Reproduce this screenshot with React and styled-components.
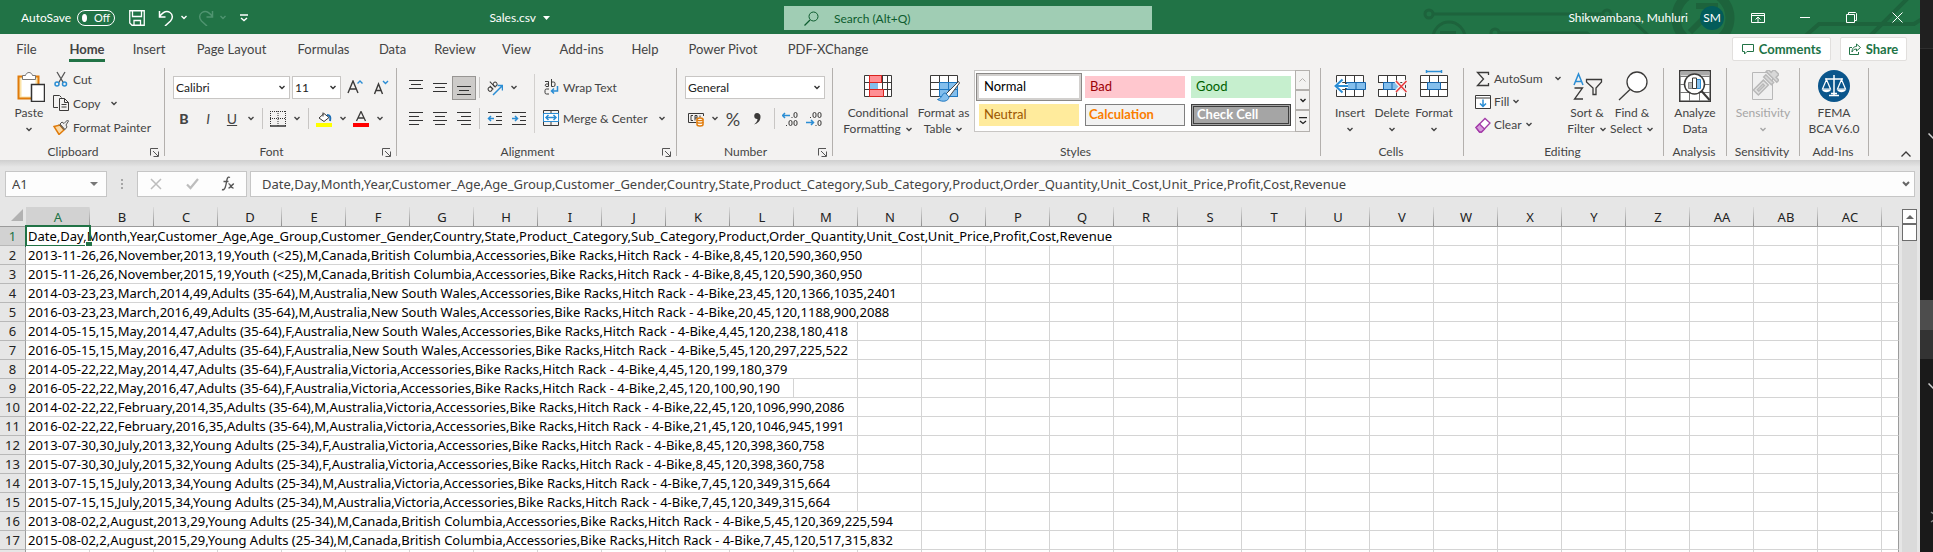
import React from "react";
import styled, { createGlobalStyle, css } from "styled-components";

const GlobalStyle = createGlobalStyle`
  * { box-sizing: border-box; }
  body { margin: 0; overflow: hidden; background: #1a1a1a; }
  body, button, input, select { font-family: Lato, "Open Sans", sans-serif; font-size: 12px; color: #444; }
  button { border: 0; padding: 0; margin: 0; background: none; }
  svg { display: block; flex: none; }
`;

const sheetFont = css`
  font-family: "Noto Sans", "Open Sans", sans-serif;
  font-size: 13px;
`;

/* ---------- shell ---------- */
const Desktop = styled.div`
  display: flex;
  height: 100vh;
`;
const ExcelWindow = styled.main`
  flex: 1;
  min-width: 0;
  display: flex;
  flex-direction: column;
  background: #e6e6e6;
`;
const BackWindow = styled.aside`
  width: 13px;
  display: flex;
  flex-direction: column;
  background: #1a1a1a;
`;
const BackBlock = styled.div`
  height: ${(p) => p.$h}px;
  background: ${(p) => p.$bg || "transparent"};
  border-bottom: ${(p) => (p.$line ? "1px solid #2e2e2e" : "0")};
  padding: ${(p) => p.$pad || 0}px 0 0 8px;
  overflow: hidden;
`;

/* ---------- title bar ---------- */
const TitleBar = styled.header`
  position: relative;
  display: grid;
  grid-template-columns: 1fr 368px 1fr;
  align-items: center;
  height: 34px;
  padding: 0 0 6px 16px;
  background: #217346;
  color: #fff;
`;
const TitleArt = styled.svg`
  position: absolute;
  right: 0;
  top: 0;
`;
const TitleSide = styled.div`
  position: relative;
  display: flex;
  align-items: center;
  height: 28px;
  padding: 5px 0 0 5px;
`;
const AutoSave = styled.label`
  display: flex;
  align-items: center;
  gap: 6px;
`;
const ToggleTrack = styled.span`
  display: flex;
  align-items: center;
  gap: 7px;
  width: 38px;
  height: 16px;
  padding: 0 4px 0 0;
  border: 1px solid #fff;
  border-radius: 8px;
  font-size: 11px;
  input {
    appearance: none;
    width: 8px;
    height: 8px;
    margin: 0 0 0 4px;
    border-radius: 50%;
    background: #fff;
  }
`;
const TitleButton = styled.button`
  display: flex;
  align-items: center;
  justify-content: center;
  width: ${(p) => p.$w}px;
  height: 24px;
  color: ${(p) => (p.$dim ? "#4f9470" : "#fff")};
`;
const FileName = styled.button`
  display: flex;
  align-items: center;
  gap: 7px;
  margin: 0 234px 0 auto;
  color: #fff;
`;
const SearchBox = styled.label`
  display: flex;
  align-items: center;
  gap: 15px;
  height: 24px;
  margin-top: 6px;
  padding-left: 20px;
  background: #a0cdb4;
  color: #0e5c2f;
  input {
    flex: 1;
    min-width: 0;
    border: 0;
    padding: 0;
    outline: 0;
    background: transparent;
  }
  input::placeholder { color: #0e5c2f; opacity: 1; }
`;
const Account = styled.button`
  display: flex;
  align-items: center;
  gap: 12px;
  margin-left: auto;
  margin-right: 11px;
  color: #fff;
`;
const Avatar = styled.span`
  display: grid;
  place-items: center;
  width: 24px;
  height: 24px;
  border-radius: 50%;
  background: #035c5a;
`;

/* ---------- tabs ---------- */
const TabBar = styled.nav`
  display: flex;
  align-items: flex-start;
  height: 34px;
  padding: 3px 13px 0 2px;
  background: #f3f2f1;
`;
const Tab = styled.button`
  display: flex;
  justify-content: center;
  width: ${(p) => p.$w}px;
  height: 26px;
  font-size: 13px;
  font-weight: ${(p) => (p.$active ? 700 : 400)};
  span {
    height: 25px;
    line-height: 25px;
    border-bottom: 3px solid ${(p) => (p.$active ? "#217346" : "transparent")};
  }
`;
const TabActions = styled.div`
  display: flex;
  gap: 9px;
  margin-left: auto;
`;
const ActionButton = styled.button`
  display: flex;
  align-items: center;
  justify-content: center;
  gap: 5px;
  width: ${(p) => p.$w}px;
  height: 24px;
  border: 1px solid #e1dfdd;
  border-radius: 2px;
  background: #fff;
  color: #217346;
  font-size: 13px;
  font-weight: 700;
`;

/* ---------- ribbon ---------- */
const Ribbon = styled.section`
  display: flex;
  height: 92px;
  padding-bottom: 4px;
  background: #f3f2f1;
`;
const GroupBox = styled.section`
  display: flex;
  flex-direction: column;
  flex: none;
  width: ${(p) => p.$w}px;
  border-right: 1px solid #b3b0ad;
`;
const GroupBody = styled.div`
  flex: 1;
  display: flex;
  justify-content: ${(p) => (p.$center ? "center" : "flex-start")};
  padding-left: ${(p) => p.$pad || 0}px;
`;
const GroupFooter = styled.footer`
  display: flex;
  height: 12px;
  line-height: 15px;
  padding-right: 2px;
  h2 {
    flex: 1;
    margin: 0;
    font-size: 12px;
    font-weight: 400;
    text-align: center;
  }
  button { width: 16px; padding: 4px 0 0 4px; }
`;
const LargeButton = styled.button`
  display: flex;
  flex-direction: column;
  align-items: center;
  width: ${(p) => p.$w}px;
  height: 72px;
  padding-top: 2px;
  line-height: 16px;
  white-space: nowrap;
  color: ${(p) => (p.disabled ? "#a6a6a6" : "#444")};
  > svg { margin-bottom: 3px; }
`;
const ButtonLine = styled.span`
  display: flex;
  align-items: center;
  justify-content: center;
  gap: 4px;
  height: 16px;
`;
const CommandList = styled.div`
  display: flex;
  flex-direction: column;
  padding-left: ${(p) => p.$pad || 0}px;
  width: ${(p) => (p.$w ? p.$w + "px" : "auto")};
`;
const Command = styled.button`
  display: flex;
  align-items: center;
  gap: ${(p) => p.$gap || 4}px;
  height: ${(p) => p.$h || 24}px;
  padding-bottom: 2px;
  white-space: nowrap;
`;
const ArrowSlot = styled.span`
  margin-left: ${(p) => p.$l || 0}px;
`;
const ToolRows = styled.div`
  display: flex;
  flex-direction: column;
  gap: 7px;
  padding: 8px 0 0 ${(p) => p.$pad || 0}px;
`;
const ToolRow = styled.div`
  display: flex;
  align-items: center;
  height: 24px;
  gap: ${(p) => p.$gap || 0}px;
  padding-left: ${(p) => p.$pad || 0}px;
  padding-bottom: 1px;
`;
const IconButton = styled.button`
  display: flex;
  align-items: center;
  justify-content: center;
  width: ${(p) => (p.$arrow ? 13 : 24)}px;
  height: 24px;
  font-size: ${(p) => p.$size || 14}px;
  font-weight: ${(p) => (p.$bold ? 900 : 400)};
  font-style: ${(p) => (p.$italic ? "italic" : "normal")};
  text-decoration: ${(p) => (p.$underline ? "underline" : "none")};
  ${(p) =>
    p.$pressed &&
    css`
      border: 1px solid #979593;
      background: #cdcbc9;
    `}
`;
const Divider = styled.span`
  width: 1px;
  height: 21px;
  margin: 0 3px 0 ${(p) => (p.$wide ? 5 : 3)}px;
  background: #c8c6c4;
`;
const TallDivider = styled.span`
  width: 1px;
  height: 59px;
  margin: 6px 8px 0 3px;
  background: #d2d0ce;
`;
const SelectBox = styled.label`
  display: flex;
  align-items: center;
  width: ${(p) => p.$w}px;
  height: 23px;
  padding-right: 3px;
  border: 1px solid #c8c6c4;
  background: #fff;
  color: #333;
  select {
    flex: 1;
    min-width: 0;
    height: 21px;
    padding: 0 2px;
    border: 0;
    outline: 0;
    appearance: none;
    background: transparent;
    color: #222;
  }
`;
const Gallery = styled.div`
  display: flex;
  height: 62px;
  margin-top: 2px;
  border: 1px solid #c8c6c4;
  border-right: 0;
  background: #fff;
`;
const StyleGrid = styled.div`
  display: grid;
  grid-template-columns: repeat(3, 100px);
  grid-auto-rows: 22px;
  gap: 6px;
  padding: 5px 4px;
`;
const StyleSwatch = styled.button`
  padding: 0 0 1px ${(p) => (p.$border ? 3 : 5)}px;
  text-align: left;
  font-size: 13px;
  line-height: 15px;
  font-weight: ${(p) => (p.$bold ? 700 : 400)};
  color: ${(p) => p.$fg};
  background: ${(p) => p.$bg};
  border: ${(p) => p.$border || "0"};
  box-shadow: ${(p) => (p.$selected ? "0 0 0 2px #d2d0ce, 0 0 0 3px #8a8886" : "none")};
`;
const GalleryScroll = styled.div`
  display: grid;
  grid-template-rows: 20px 20px 1fr;
  width: 15px;
  margin: -1px 0;
  button {
    display: grid;
    place-items: center;
    border: 1px solid #b3b0ad;
    background: #f3f2f1;
  }
`;
const CollapseButton = styled.button`
  align-self: flex-end;
  margin: 0 8px -2px auto;
`;

/* ---------- formula bar ---------- */
const FormulaBar = styled.section`
  display: flex;
  height: 47px;
  padding: 11px 5px 10px 5px;
  background: linear-gradient(#cfcfcf, #e6e6e6 7px);
`;
const WhiteBox = styled.div`
  display: flex;
  align-items: center;
  flex: ${(p) => (p.$w ? "none" : "1")};
  width: ${(p) => (p.$w ? p.$w + "px" : "auto")};
  height: 26px;
  margin-left: ${(p) => p.$gap || 0}px;
  padding: 0 ${(p) => p.$end || 0}px 0 ${(p) => p.$start || 0}px;
  border: 1px solid #c6c6c6;
  background: #fdfdfd;
  input {
    flex: 1;
    min-width: 0;
    border: 0;
    padding: 0;
    outline: 0;
    background: transparent;
    ${sheetFont}
  }
`;
const FormulaTool = styled.button`
  display: grid;
  place-items: center;
  width: 36px;
  height: 24px;
`;
const Grip = styled.span`
  width: 30px;
  display: grid;
  place-items: center;
`;

/* ---------- sheet ---------- */
const SheetArea = styled.section`
  flex: 1;
  min-height: 0;
  display: flex;
  overflow: hidden;
`;
const SheetClip = styled.div`
  flex: 1;
  min-width: 0;
  overflow: hidden;
`;
const Sheet = styled.table`
  width: 100%;
  table-layout: fixed;
  border-collapse: separate;
  border-spacing: 0;
  ${sheetFont}
  color: #000;
  col { width: 64px; }
  col:first-child { width: 26px; }
  col:last-child { width: auto; }
`;
const Corner = styled.td`
  height: 20px;
  padding: 0 3px 3px 0;
  border-bottom: 1px solid #9b9b9b;
  svg { margin-left: auto; }
`;
const ColumnHead = styled.th`
  height: 20px;
  padding: 0;
  line-height: 18px;
  font-weight: 400;
  color: ${(p) => (p.$active ? "#217346" : "#222")};
  border-bottom: 1px solid #9b9b9b;
  background: linear-gradient(#dcdcdc, #8f8f8f) right / ${(p) => (p.$last ? 0 : 1)}px 100% no-repeat
    ${(p) => (p.$active ? "#d2d2d2" : "#e6e6e6")};
`;
const RowHead = styled.th`
  height: 19px;
  padding: 0;
  line-height: 18px;
  font-weight: 400;
  color: ${(p) => (p.$active ? "#217346" : "#222")};
  border-right: 1px solid #9b9b9b;
  border-bottom: 1px solid #b8b8b8;
  background: ${(p) => (p.$active ? "#d2d2d2" : "#e6e6e6")};
`;
const Cell = styled.td`
  position: relative;
  height: 19px;
  padding: 0 0 0 2px;
  line-height: 18px;
  white-space: nowrap;
  background: #fff;
  border-right: 1px solid #d4d4d4;
  border-bottom: 1px solid #d4d4d4;
  &:last-child { border-right-color: #9b9b9b; }
`;
const Selection = styled.span`
  position: absolute;
  left: -1px;
  top: -2px;
  width: 66px;
  height: 22px;
  border: 2px solid #217346;
  &::after {
    content: "";
    position: absolute;
    right: -3px;
    bottom: -3px;
    width: 6px;
    height: 6px;
    background: #217346;
    border: solid #fff;
    border-width: 1px 0 0 1px;
  }
`;
const ScrollBar = styled.div`
  display: flex;
  flex-direction: column;
  width: 15px;
  margin: 2px 3px 0 3px;
  background: #dadada;
`;
const ScrollPart = styled.button`
  display: grid;
  place-items: center;
  height: ${(p) => p.$h}px;
  border: 1px solid #6d6d6d;
  background: #fff;
`;

/* ---------- drawings ---------- */
const Icon = ({ w = 16, h = w, children, stroke = "#3b3a39", ...rest }) => (
  <svg width={w} height={h} viewBox={`0 0 ${w} ${h}`} fill="none" stroke={stroke} aria-hidden="true" {...rest}>
    {children}
  </svg>
);
const Arrow = ({ color = "#444" }) => (
  <Icon w={8} h={5} stroke={color} strokeWidth="1.4"><path d="M1.500 1 4 3.500 6.500 1" /></Icon>
);
const Lines = ({ y, x = [1, 1, 1, 1], e = [15, 15, 15, 15] }) => (
  <Icon stroke="#333"><path d={y.map((v, i) => `M${x[i]} ${v}.5H${e[i]}`).join("")} /></Icon>
);
const Launcher = () => (
  <Icon w={9} h={9} stroke="#555"><path d="M.5 7.500V.5H8M3 3l5 5M8.500 3.500v5h-5" /></Icon>
);
const PasteIcon = () => (
  <Icon w={32}>
    <path d="M6 6.500H25.500V28.500H5.500V6.500Z" fill="#fbe3a8" stroke="#e07b0a" strokeWidth="2" />
    <path d="M8.500 8.500h14v18h-14z" fill="#fff" stroke="none" />
    <path d="M9.500 9.500v-4h3c1-4 6-4 7 0h3v4z" fill="#fff" stroke="#777" />
    <path d="M18.500 14.500h13v17h-13z" fill="#fff" stroke="#333" strokeWidth="1.500" />
  </Icon>
);
const CutIcon = () => (
  <Icon><path d="M4 1l6.500 11M12 1 5.500 12" strokeWidth="1.300" stroke="#555" /><circle cx="4" cy="13" r="2" stroke="#2a8dd4" strokeWidth="1.500" /><circle cx="11.500" cy="13" r="2" stroke="#2a8dd4" strokeWidth="1.500" /></Icon>
);
const CopyIcon = () => (
  <Icon><path d="M5 12.500H.5V.5h6l2 2M6.500 3.500h5l4 4v8h-9zM11.500 3.500v4h4M8.500 9.500h5M8.500 12h5" /></Icon>
);
const PainterIcon = () => (
  <Icon>
    <path d="M1 7.500 7 6l4 5-5 4.500z" fill="#fbd9a5" stroke="#e07b0a" strokeWidth="1.500" />
    <path d="M6 5.500 11.500 11M7 5l2-2 2 1.500L14.500 1l1 1L13 6l1 2-2 2.500z" stroke="#555" fill="#eee" />
  </Icon>
);
const BordersIcon = () => (
  <Icon stroke="#333"><path d="M.5 0v15M8 0v15M15.500 0v15M0 .5h16M0 7.500h16" strokeDasharray="1 1" /><path d="M0 15h16" strokeWidth="1.500" /></Icon>
);
const FillColorIcon = () => (
  <Icon><path d="M7 1.500v4M3 7l5-4.500 5 4L8 10.500z" fill="#fff" /><path d="M11 4c3 0 4 2 3 6" stroke="#1f6fb5" strokeWidth="2" /><path d="M0 12h16v4H0z" fill="#ff0" stroke="none" /></Icon>
);
const FontColorIcon = () => (
  <Icon><path d="M3.500 10 8 .5 12.500 10M5 7h6" strokeWidth="1.300" /><path d="M0 12h16v4H0z" fill="#f00" stroke="none" /></Icon>
);
const GrowIcon = ({ down }) => (
  <Icon w={16} h={16}>
    <path d={down ? "M1.500 14 5.500 4l4 10M3 10.500h5" : "M1 13 6 1l5 12M3 9h6"} strokeWidth="1.400" />
    <path d={down ? "M10 1l2.500 2.500L15 1" : "M10.500 3.500 13 1l2.500 2.500"} stroke="#2a8dd4" strokeWidth="1.400" />
  </Icon>
);
const OrientIcon = () => (
  <Icon><g transform="rotate(-45 6 7)"><circle cx="2.500" cy="6.500" r="2" /><path d="M4.500 4v5M7.500 1v8" /><circle cx="9.500" cy="6.500" r="2" /></g><path d="M6 15 15 6M10.500 5.500H15.500V10.500" stroke="#2a8dd4" strokeWidth="1.500" /></Icon>
);
const WrapIcon = () => (
  <Icon>
    <path d="M2 2.500h3.500v5H3a1.500 1.500 0 0 1 0-2.500h2.500M8.500 0v7.500h2a1.500 1.500 0 0 0 1.500-1.500V4.500A1.500 1.500 0 0 0 10.500 3h-2M6 10H3.500A1.500 1.500 0 0 0 2 11.500v2A1.500 1.500 0 0 0 3.500 15H6" />
    <path d="M14.500 7v5H8.500M11 9.500 8.500 12l2.500 2.500" stroke="#2a8dd4" strokeWidth="1.500" />
  </Icon>
);
const MergeIcon = () => (
  <Icon><path d="M.5.5h15v15H.5zM8 .5v3M8 12v3.500" /><path d="M.5 3.500h15v8H.5z" fill="#fff" stroke="#2a8dd4" /><path d="M3 7.500h10M5.500 5 3 7.500 5.500 10M10.500 5 13 7.500 10.500 10" stroke="#2a8dd4" strokeWidth="1.500" /></Icon>
);
const IndentIcon = ({ out }) => (
  <Icon><path d="M1 1.500h14M9 5.500h6M9 9.500h6M1 13.500h14" stroke="#333" /><path d={out ? "M7 7.500H1.500M4 5 1.500 7.500 4 10" : "M1 7.500h5.500M4 5l2.500 2.500L4 10"} stroke="#2a8dd4" strokeWidth="1.500" /></Icon>
);
const MoneyIcon = () => (
  <Icon><path d="M15.500 5V2.500H.5v9H8M5 4.500H3v5h2M7 9.500v-5h2V7H7M12 4.500v2" /><path d="M9 8.500c0-2 6-2 6 0v5c0 2-6 2-6 0z" fill="#fff" stroke="#e07b0a" strokeWidth="1.500" /><path d="M9 8.500c0 1.500 6 1.500 6 0M9 11c0 1.500 6 1.500 6 0" stroke="#e07b0a" strokeWidth="1.300" /></Icon>
);
const CommaIcon = () => (
  <Icon w={10} h={14}><path d="M5 1a3 3 0 1 0 .5 6C5.500 9 4 11 2 12.500 6 11.500 8.500 8.500 8.500 5A3.500 3.500 0 0 0 5 1z" fill="#3b3a39" stroke="none" /></Icon>
);
const DecimalIcon = ({ less }) => (
  <Icon w={16}>
    {less ? (
      <><rect x="7" y="1.500" width="3" height="5" rx="1.500" /><rect x="12" y="1.500" width="3" height="5" rx="1.500" /><rect x="12" y="9.500" width="3" height="5" rx="1.500" /><path d="M4 6.500h1M9.500 14.500h1" /><path d="M0 11.500h7.500M5 9l2.500 2.500L5 14" stroke="#2a8dd4" strokeWidth="1.500" /></>
    ) : (
      <><rect x="12" y="1.500" width="3" height="5" rx="1.500" /><rect x="7" y="9.500" width="3" height="5" rx="1.500" /><rect x="12" y="9.500" width="3" height="5" rx="1.500" /><path d="M9.500 6.500h1M4 14.500h1" /><path d="M8 4.500H.5M3 2 .5 4.500 3 7" stroke="#2a8dd4" strokeWidth="1.500" /></>
    )}
  </Icon>
);
const GridFrame = ({ y = 5 }) => (
  <path d={`M2.500 ${y}.5h27v21h-27zM2.500 ${y + 7}.5h27M2.500 ${y + 14}.5h27M11.500 ${y}.5v21M20.500 ${y}.5v21`} fill="#fff" />
);
const ConditionalIcon = () => (
  <Icon w={32}><GridFrame /><path d="M25.500 5.500v21" /><path d="M7.500 5.500h12v7h-12zM7.500 19.500h14v7h-14z" fill="#ff8f94" stroke="#d8231f" /><path d="M8 13h8v6H8z" fill="#83beec" stroke="none" /><path d="M7.500 5.500v21" stroke="#d8231f" /></Icon>
);
const FormatTableIcon = () => (
  <Icon w={32}><GridFrame /><path d="M11.500 12.500h18v14h-18z" fill="#83beec" stroke="#1f78c1" /><path d="M20.500 12.500v14M11.500 19.500h18" stroke="#1f78c1" /><path d="M30.500 11.500 18 24l3 3 10.500-14z" fill="#fff" stroke="#444" /><path d="M17.500 23c-4 0-2.500 5-8 6.500 5 3 11 2 11.500-2.500z" fill="#83beec" stroke="#1f78c1" /></Icon>
);
const CellInsertIcon = () => (
  <Icon w={32}><GridFrame /><path d="M12.500 12.500h19v7h-19zM22 12.500v7" fill="#83beec" stroke="#1565ad" /><path d="M14 16H2M9 9l-7.500 7L9 23" stroke="#fff" strokeWidth="4" /><path d="M14 16H2M8.500 9.500 1.500 16l7 6.500" stroke="#2a8dd4" strokeWidth="2" /></Icon>
);
const CellDeleteIcon = () => (
  <Icon w={32}><GridFrame /><path d="M0 13h8v6H0z" fill="#f3f2f1" stroke="none" /><path d="M7.500 12.500h13l3.500 3.500-3.500 3.500h-13zM16 12.500v7" fill="#83beec" stroke="#1565ad" /><path d="M20 11l10.500 11M30.500 11 20 22" stroke="#f3f2f1" strokeWidth="4" /><path d="M20 11l10.500 11M30.500 11 20 22" stroke="#e8393c" strokeWidth="1.500" /></Icon>
);
const CellFormatIcon = () => (
  <Icon w={32}><GridFrame /><path d="M9.500 12.500h13v7h-13z" fill="#83beec" stroke="#1565ad" /><path d="M8.500 0v3M23.500 0v3M8.500 1.500h15" stroke="#2a8dd4" strokeWidth="1.500" /></Icon>
);
const SigmaIcon = () => <Icon><path d="M13.500 4V1.500h-11L8.500 8l-6 6.500h11V12" strokeWidth="1.300" /></Icon>;
const FillDownIcon = () => (
  <Icon><path d="M.5 1.500h15v13H.5zM.5 4h15" fill="#fff" /><path d="M8 5.500v7M5 9.500l3 3 3-3" stroke="#2a8dd4" strokeWidth="1.500" /></Icon>
);
const ClearIcon = () => (
  <Icon><path d="M1 10.500 10 1.500l5 4.500-8.500 9H4.500z" fill="#fff" stroke="#a33ba8" strokeWidth="1.300" /><path d="M1 10.500 4.500 7l5 5-3 3h-2z" fill="#d69bdb" stroke="#a33ba8" strokeWidth="1.300" /></Icon>
);
const SortIcon = () => (
  <Icon w={32}><path d="M3 15 7.500 4l4.500 11M4.500 11.500h6" stroke="#2a8dd4" strokeWidth="1.500" /><path d="M3.500 18h8l-8 11h8.500" strokeWidth="1.300" /><path d="M15.500 9.500h15v2.500l-5.500 6v6.500h-3v-6.500l-6.500-6z" strokeWidth="1.300" /></Icon>
);
const FindIcon = () => (
  <Icon w={32}><circle cx="21" cy="12" r="10" fill="#fff" strokeWidth="1.300" /><path d="M14 19.500 3 30" strokeWidth="1.300" /></Icon>
);
const AnalyzeIcon = () => (
  <Icon w={32}><path d="M.75.75h30.500v30.500H.75z" fill="#fff" strokeWidth="1.500" /><path d="M1.500 1.500h29v4h-29z" fill="#aaa" stroke="none" /><path d="M1 6.500h30M1 14.500h30M1 22.500h30M10.500 6v25M20.500 6v25" stroke="#777" /><circle cx="15.500" cy="14" r="10" fill="#fff" strokeWidth="1.500" /><path d="M22.500 21l8 9" strokeWidth="2" /><path d="M9.500 12.500h4v6h-4z" fill="#b9b9b9" stroke="#888" /><path d="M17.500 9.500h4v9h-4z" fill="#83beec" stroke="#2a8dd4" /><path d="M13.500 8h4v10.500h-4z" fill="#fff" /></Icon>
);
const SensitivityIcon = () => (
  <Icon w={32} stroke="#b8b8b8">
    <path d="M5.500 2.500h20v27h-20z" fill="#f0f0f0" />
    <g transform="rotate(-45 16 14)">
      <path d="M5 11.500h14v7H5zM8 14h8v2H8z" fill="#e4e4e4" strokeWidth="1.500" />
      <path d="M21.500 9.500h3v11h-3zM27 7.500h3v4h4v7h-4v4h-3z" fill="#d8d8d8" strokeWidth="1.500" />
    </g>
  </Icon>
);
const FemaIcon = () => (
  <Icon w={32} stroke="#fff"><circle cx="16" cy="16" r="16" fill="#0b568c" stroke="none" /><path d="M16 5v20M7 9h18M11 25.500h10M13 23.500h6" strokeWidth="1.500" /><path d="M8.500 9.500 4.500 19h8zM23.500 9.500l-4 9.500h8z" strokeWidth="1.200" /><path d="M4 19.500h9c-1 3.500-8 3.500-9 0zM19 19.500h9c-1 3.500-8 3.500-9 0z" fill="#fff" stroke="none" /></Icon>
);

/* ---------- data ---------- */
const TABS = [
  ["File", 49], ["Home", 72], ["Insert", 52], ["Page Layout", 113], ["Formulas", 71], ["Data", 67],
  ["Review", 58], ["View", 65], ["Add-ins", 65], ["Help", 62], ["Power Pivot", 94], ["PDF-XChange", 116],
];
const HEADER =
  "Date,Day,Month,Year,Customer_Age,Age_Group,Customer_Gender,Country,State,Product_Category,Sub_Category,Product,Order_Quantity,Unit_Cost,Unit_Price,Profit,Cost,Revenue";
const RACK = "Accessories,Bike Racks,Hitch Rack - 4-Bike";
/* each record: text of the line, and how many columns it runs over */
const ROWS = [
  [HEADER, 18],
  [`2013-11-26,26,November,2013,19,Youth (<25),M,Canada,British Columbia,${RACK},8,45,120,590,360,950`, 14],
  [`2015-11-26,26,November,2015,19,Youth (<25),M,Canada,British Columbia,${RACK},8,45,120,590,360,950`, 14],
  [`2014-03-23,23,March,2014,49,Adults (35-64),M,Australia,New South Wales,${RACK},23,45,120,1366,1035,2401`, 14],
  [`2016-03-23,23,March,2016,49,Adults (35-64),M,Australia,New South Wales,${RACK},20,45,120,1188,900,2088`, 14],
  [`2014-05-15,15,May,2014,47,Adults (35-64),F,Australia,New South Wales,${RACK},4,45,120,238,180,418`, 13],
  [`2016-05-15,15,May,2016,47,Adults (35-64),F,Australia,New South Wales,${RACK},5,45,120,297,225,522`, 13],
  [`2014-05-22,22,May,2014,47,Adults (35-64),F,Australia,Victoria,${RACK},4,45,120,199,180,379`, 13],
  [`2016-05-22,22,May,2016,47,Adults (35-64),F,Australia,Victoria,${RACK},2,45,120,100,90,190`, 12],
  [`2014-02-22,22,February,2014,35,Adults (35-64),M,Australia,Victoria,${RACK},22,45,120,1096,990,2086`, 13],
  [`2016-02-22,22,February,2016,35,Adults (35-64),M,Australia,Victoria,${RACK},21,45,120,1046,945,1991`, 13],
  [`2013-07-30,30,July,2013,32,Young Adults (25-34),F,Australia,Victoria,${RACK},8,45,120,398,360,758`, 13],
  [`2015-07-30,30,July,2015,32,Young Adults (25-34),F,Australia,Victoria,${RACK},8,45,120,398,360,758`, 13],
  [`2013-07-15,15,July,2013,34,Young Adults (25-34),M,Australia,Victoria,${RACK},7,45,120,349,315,664`, 13],
  [`2015-07-15,15,July,2015,34,Young Adults (25-34),M,Australia,Victoria,${RACK},7,45,120,349,315,664`, 13],
  [`2013-08-02,2,August,2013,29,Young Adults (25-34),M,Canada,British Columbia,${RACK},5,45,120,369,225,594`, 14],
  [`2015-08-02,2,August,2015,29,Young Adults (25-34),M,Canada,British Columbia,${RACK},7,45,120,517,315,832`, 14],
];
const COLUMNS = Array.from({ length: 29 }, (_, i) =>
  i < 26 ? String.fromCharCode(65 + i) : "A" + String.fromCharCode(39 + i)
);

/* ---------- parts ---------- */
const Group = ({ title, w, pad, center, launcher, children }) => (
  <GroupBox $w={w}>
    <GroupBody $pad={pad} $center={center}>{children}</GroupBody>
    <GroupFooter>
      <h2>{title}</h2>
      {launcher && <button aria-label={`${title} settings`}><Launcher /></button>}
    </GroupFooter>
  </GroupBox>
);
const Large = ({ icon, lines, arrow, w, disabled }) => (
  <LargeButton $w={w} disabled={disabled}>
    {icon}
    <ButtonLine>{lines[0]}</ButtonLine>
    <ButtonLine>
      {lines[1]}
      {arrow && <Arrow color={disabled ? "#a6a6a6" : "#444"} />}
    </ButtonLine>
  </LargeButton>
);
const Pick = ({ w, label, value }) => (
  <SelectBox $w={w}>
    <select aria-label={label} defaultValue={value}><option>{value}</option></select>
    <Arrow color="#333" />
  </SelectBox>
);
const More = ({ label }) => <IconButton $arrow aria-label={label}><Arrow /></IconButton>;

function TopBar() {
  return (
    <TitleBar>
      <TitleArt width="500" height="34" viewBox="0 0 500 34" fill="none" stroke="#1d633c" strokeWidth="3" aria-hidden="true">
        <circle cx="9" cy="14" r="4" /><path d="M13 14h170" /><circle cx="187" cy="14" r="4" />
        <circle cx="29" cy="38" r="16" /><path d="M20 33h16" strokeWidth="4" />
        <circle cx="75" cy="33" r="4" /><path d="M79 33h88l8 6M191 17l18 0 22 21" />
        <circle cx="283" cy="18" r="27" strokeWidth="9" /><path d="M270 32l24-24M276 6h19v19" strokeWidth="6" />
        <path d="M383 38l16-14H494l8-5M448 38 490-4" strokeWidth="4" />
      </TitleArt>
      <TitleSide>
        <AutoSave>
          AutoSave
          <ToggleTrack><input type="checkbox" role="switch" aria-label="AutoSave" />Off</ToggleTrack>
        </AutoSave>
        <TitleButton $w={44} aria-label="Save">
          <Icon stroke="#fff"><path d="M.75.75h14.500v14.500H3L.75 13zM3.500 1v5.500h9V1M5 15v-4.500h6.500V15" strokeWidth="1.300" /></Icon>
        </TitleButton>
        <TitleButton $w={14} aria-label="Undo">
          <Icon stroke="#fff"><path d="M1.500 1v6h6M1.500 6.500C5 2 9 .5 12 2.500c3 2 3 6 .5 8.500L7 16" strokeWidth="1.500" /></Icon>
        </TitleButton>
        <TitleButton $w={22} aria-label="Undo history"><Arrow color="#fff" /></TitleButton>
        <TitleButton $w={22} $dim aria-label="Redo">
          <Icon stroke="#4f9470"><path d="M14.500 1v6h-6M14.500 6.500C11 2 7 .5 4 2.500 1 4.500 1 8.500 3.500 11L9 16" strokeWidth="1.500" /></Icon>
        </TitleButton>
        <TitleButton $w={11} $dim aria-label="Redo history"><Arrow color="#4f9470" /></TitleButton>
        <TitleButton $w={32} aria-label="Customize quick access">
          <Icon w={8} h={8} stroke="#fff"><path d="M0 1h8M1 4l3 2.500L7 4" strokeWidth="1.400" /></Icon>
        </TitleButton>
        <FileName>
          Sales.csv
          <Icon w={7} h={4} stroke="none"><path d="M0 0h7L3.500 4z" fill="#fff" /></Icon>
        </FileName>
      </TitleSide>
      <SearchBox>
        <Icon w={15} stroke="#0e5c2f"><circle cx="9.500" cy="5.500" r="4.500" /><path d="M6 9 .5 14.500" strokeWidth="1.300" /></Icon>
        <input type="search" aria-label="Search" placeholder="Search (Alt+Q)" />
      </SearchBox>
      <TitleSide>
        <Account>Shikwambana, Muhluri<Avatar>SM</Avatar></Account>
        <TitleButton $w={46} aria-label="Ribbon display options">
          <Icon w={14} h={12} stroke="#fff"><path d="M.5 1.500h13v9H.5zM.5 3.500h13M7 10V5M4.500 7.500 7 5l2.500 2.500" /></Icon>
        </TitleButton>
        <TitleButton $w={47} aria-label="Minimize"><Icon w={10} h={2} stroke="#fff"><path d="M0 .5h10" /></Icon></TitleButton>
        <TitleButton $w={46} aria-label="Restore">
          <Icon w={11} stroke="#fff"><path d="M.5 2.500h8v8h-8zM2.500 2V.5h7l1 1V8.500H9" /></Icon>
        </TitleButton>
        <TitleButton $w={46} aria-label="Close"><Icon w={11} stroke="#fff"><path d="M.5.5l10 10M10.500.5l-10 10" /></Icon></TitleButton>
      </TitleSide>
    </TitleBar>
  );
}

function Tabs() {
  return (
    <TabBar>
      {TABS.map(([name, w]) => (
        <Tab key={name} $w={w} $active={name === "Home"}><span>{name}</span></Tab>
      ))}
      <TabActions>
        <ActionButton $w={99}>
          <Icon w={12} h={11} stroke="#217346"><path d="M.5.5h11v7H5l-2.500 2.500V7.500h-2z" /></Icon>Comments
        </ActionButton>
        <ActionButton $w={67}>
          <Icon w={12} h={12} stroke="#217346"><path d="M3 4.500H.5v7h9V9M7.500 1l4 3.500-4 3.500V6C5 6 4 7 3 9c0-4 2-5.500 4.500-5.500z" /></Icon>Share
        </ActionButton>
      </TabActions>
    </TabBar>
  );
}

function HomeRibbon() {
  return (
    <Ribbon>
      <Group title="Clipboard" w={165} pad={8} launcher>
        <Large icon={<PasteIcon />} lines={["Paste"]} arrow w={42} />
        <CommandList $pad={3}>
          <Command><CutIcon />Cut</Command>
          <Command><CopyIcon />Copy<ArrowSlot $l={6}><Arrow /></ArrowSlot></Command>
          <Command><PainterIcon />Format Painter</Command>
        </CommandList>
      </Group>
      <Group title="Font" w={232} launcher>
        <ToolRows $pad={7}>
          <ToolRow $gap={2} $pad={1}>
            <Pick w={117} label="Font" value="Calibri" />
            <Pick w={49} label="Font size" value="11" />
            <IconButton aria-label="Increase font size"><GrowIcon /></IconButton>
            <IconButton aria-label="Decrease font size"><GrowIcon down /></IconButton>
          </ToolRow>
          <ToolRow>
            <IconButton $bold>B</IconButton>
            <IconButton $italic>I</IconButton>
            <IconButton $underline>U</IconButton>
            <More label="Underline styles" />
            <Divider $wide />
            <IconButton aria-label="Borders"><BordersIcon /></IconButton>
            <More label="Border styles" />
            <Divider $wide />
            <IconButton aria-label="Fill color"><FillColorIcon /></IconButton>
            <More label="Fill colors" />
            <IconButton aria-label="Font color"><FontColorIcon /></IconButton>
            <More label="Font colors" />
          </ToolRow>
        </ToolRows>
      </Group>
      <Group title="Alignment" w={280} launcher>
        <ToolRows $pad={7}>
          <ToolRow>
            <IconButton aria-label="Top align"><Lines y={[0, 4, 8]} x={[1, 3, 1]} e={[15, 13, 15]} /></IconButton>
            <IconButton aria-label="Middle align"><Lines y={[3, 7, 11]} x={[1, 3, 1]} e={[15, 13, 15]} /></IconButton>
            <IconButton $pressed aria-label="Bottom align"><Lines y={[6, 10, 14]} x={[1, 3, 1]} e={[15, 13, 15]} /></IconButton>
            <Divider />
            <IconButton aria-label="Orientation"><OrientIcon /></IconButton>
            <More label="Orientation options" />
          </ToolRow>
          <ToolRow>
            <IconButton aria-label="Align left"><Lines y={[1, 5, 9, 13]} e={[15, 11, 15, 11]} /></IconButton>
            <IconButton aria-label="Center"><Lines y={[1, 5, 9, 13]} x={[1, 3, 1, 3]} e={[15, 13, 15, 13]} /></IconButton>
            <IconButton aria-label="Align right"><Lines y={[1, 5, 9, 13]} x={[1, 5, 1, 5]} /></IconButton>
            <Divider />
            <IconButton aria-label="Decrease indent"><IndentIcon out /></IconButton>
            <IconButton aria-label="Increase indent"><IndentIcon /></IconButton>
          </ToolRow>
        </ToolRows>
        <TallDivider />
        <ToolRows>
          <Command><WrapIcon />Wrap Text</Command>
          <Command><MergeIcon />Merge &amp; Center<ArrowSlot $l={6}><Arrow /></ArrowSlot></Command>
        </ToolRows>
      </Group>
      <Group title="Number" w={156} launcher>
        <ToolRows $pad={7}>
          <ToolRow $pad={1}><Pick w={140} label="Number format" value="General" /></ToolRow>
          <ToolRow>
            <IconButton aria-label="Accounting format"><MoneyIcon /></IconButton>
            <More label="Accounting formats" />
            <IconButton $size={18} aria-label="Percent style">%</IconButton>
            <IconButton aria-label="Comma style"><CommaIcon /></IconButton>
            <Divider $wide />
            <IconButton aria-label="Increase decimal"><DecimalIcon /></IconButton>
            <IconButton aria-label="Decrease decimal"><DecimalIcon less /></IconButton>
          </ToolRow>
        </ToolRows>
      </Group>
      <Group title="Styles" w={488} pad={10}>
        <Large icon={<ConditionalIcon />} lines={["Conditional", "Formatting"]} arrow w={70} />
        <Large icon={<FormatTableIcon />} lines={["Format as", "Table"]} arrow w={61} />
        <Gallery>
          <StyleGrid>
            <StyleSwatch $bg="#fff" $fg="#000" $selected>Normal</StyleSwatch>
            <StyleSwatch $bg="#ffc7ce" $fg="#9c0006">Bad</StyleSwatch>
            <StyleSwatch $bg="#c6efce" $fg="#006100">Good</StyleSwatch>
            <StyleSwatch $bg="#ffeb9c" $fg="#9c5700">Neutral</StyleSwatch>
            <StyleSwatch $bg="#f2f2f2" $fg="#fa7d00" $border="1px solid #7f7f7f" $bold>Calculation</StyleSwatch>
            <StyleSwatch $bg="#a5a5a5" $fg="#fff" $border="3px double #3f3f3f" $bold>Check Cell</StyleSwatch>
          </StyleGrid>
          <GalleryScroll>
            <button aria-label="Previous styles" disabled><Icon w={7} h={4} stroke="#b3b0ad"><path d="M.5 3.500l3-3 3 3" /></Icon></button>
            <button aria-label="Next styles"><Arrow color="#222" /></button>
            <button aria-label="More styles"><Icon w={8} h={8} stroke="#222"><path d="M0 .5h8M1 4l3 2.500L7 4" strokeWidth="1.300" /></Icon></button>
          </GalleryScroll>
        </Gallery>
      </Group>
      <Group title="Cells" w={143} pad={8}>
        <Large icon={<CellInsertIcon />} lines={["Insert"]} arrow w={42} />
        <Large icon={<CellDeleteIcon />} lines={["Delete"]} arrow w={42} />
        <Large icon={<CellFormatIcon />} lines={["Format"]} arrow w={42} />
      </Group>
      <Group title="Editing" w={200}>
        <CommandList $pad={11} $w={101}>
          <Command $h={23} $gap={3}><SigmaIcon />AutoSum<ArrowSlot $l={8}><Arrow /></ArrowSlot></Command>
          <Command $h={23} $gap={3}><FillDownIcon />Fill<Arrow /></Command>
          <Command $h={23} $gap={3}><ClearIcon />Clear<Arrow /></Command>
        </CommandList>
        <Large icon={<SortIcon />} lines={["Sort &", "Filter"]} arrow w={44} />
        <Large icon={<FindIcon />} lines={["Find &", "Select"]} arrow w={46} />
      </Group>
      <Group title="Analysis" w={63} center><Large icon={<AnalyzeIcon />} lines={["Analyze", "Data"]} w={56} /></Group>
      <Group title="Sensitivity" w={73} center><Large icon={<SensitivityIcon />} lines={["Sensitivity"]} arrow disabled w={64} /></Group>
      <Group title="Add-Ins" w={69} center><Large icon={<FemaIcon />} lines={["FEMA", "BCA V6.0"]} w={60} /></Group>
      <CollapseButton aria-label="Collapse the ribbon">
        <Icon w={12} h={8}><path d="M1.500 6.500 6 2l4.500 4.500" strokeWidth="1.300" /></Icon>
      </CollapseButton>
    </Ribbon>
  );
}

function Formula() {
  return (
    <FormulaBar>
      <WhiteBox $w={102} $start={6} $end={8}>
        <input aria-label="Name box" defaultValue="A1" />
        <Icon w={8} h={4} stroke="none"><path d="M0 0h8L4 4z" fill="#777" /></Icon>
      </WhiteBox>
      <Grip><Icon w={2} h={10} stroke="none"><path d="M0 0h2v2H0zM0 4h2v2H0zM0 8h2v2H0z" fill="#a6a6a6" /></Icon></Grip>
      <WhiteBox $w={110}>
        <FormulaTool aria-label="Cancel"><Icon w={12} stroke="#bdbdbd"><path d="M1 1l10 10M11 1 1 11" strokeWidth="1.500" /></Icon></FormulaTool>
        <FormulaTool aria-label="Enter"><Icon w={13} h={12} stroke="#bdbdbd"><path d="M1 6.500 4.500 10 12 1" strokeWidth="2.200" /></Icon></FormulaTool>
        <FormulaTool aria-label="Insert function">
          <Icon w={14} h={16} stroke="#555"><path d="M9 1.500C6.500 0 6 3 5.500 6S4 15 1 13.500M2.500 5.500h5M7.500 8c2-1 2 4.500 5 4M13 8c-2-.5-3 4-5.500 4" strokeWidth="1.400" /></Icon>
        </FormulaTool>
      </WhiteBox>
      <WhiteBox $gap={3} $start={11} $end={4}>
        <input aria-label="Formula" defaultValue={HEADER} />
        <Icon w={8} h={6} stroke="#666"><path d="M1 1l3 3 3-3" strokeWidth="2" /></Icon>
      </WhiteBox>
    </FormulaBar>
  );
}

const emptyCells = (used) => COLUMNS.slice(used).map((c) => <Cell key={c} />);

function Grid() {
  return (
    <SheetArea>
      <SheetClip>
        <Sheet>
          <colgroup>
            <col />
            {COLUMNS.map((c) => <col key={c} />)}
            <col />
          </colgroup>
          <thead>
            <tr>
              <Corner><Icon w={12} h={12} stroke="none"><path d="M12 0v12H0z" fill="#b2b2b2" /></Icon></Corner>
              {COLUMNS.map((c) => <ColumnHead key={c} scope="col" $active={c === "A"}>{c}</ColumnHead>)}
              <ColumnHead $last />
            </tr>
          </thead>
          <tbody>
            {ROWS.map(([text, span], i) => (
              <tr key={i}>
                <RowHead scope="row" $active={i === 0}>{i + 1}</RowHead>
                <Cell colSpan={span}>{text}{i === 0 && <Selection />}</Cell>
                {emptyCells(span)}
                <Cell />
              </tr>
            ))}
            <tr><RowHead />{emptyCells(0)}<Cell /></tr>
          </tbody>
        </Sheet>
      </SheetClip>
      <ScrollBar>
        <ScrollPart $h={15} aria-label="Scroll up"><Icon w={8} h={4} stroke="none"><path d="M4 0l4 4H0z" fill="#666" /></Icon></ScrollPart>
        <ScrollPart $h={17} aria-label="Scroll position" />
      </ScrollBar>
    </SheetArea>
  );
}

const EdgeMark = () => <Icon w={8} h={8} stroke="#d0d0d0"><path d="M.5.5l6 6 6-6" strokeWidth="1.500" /></Icon>;

export default function App() {
  return (
    <>
      <GlobalStyle />
      <Desktop>
        <ExcelWindow>
          <TopBar />
          <Tabs />
          <HomeRibbon />
          <Formula />
          <Grid />
        </ExcelWindow>
        <BackWindow>
          <BackBlock $h={49} $bg="#202020" $line />
          <BackBlock $h={251} $pad={84}><EdgeMark /></BackBlock>
          <BackBlock $h={30} $bg="#4d4d4d" />
          <BackBlock $h={29} $bg="#333" />
          <BackBlock $h={150} $pad={24}><EdgeMark /></BackBlock>
          <BackBlock $h={20} $pad={2}>
            <Icon w={6} h={12} stroke="#888"><path d="M3 1l3 2M3 11l3-2" strokeWidth="1.500" /></Icon>
          </BackBlock>
        </BackWindow>
      </Desktop>
    </>
  );
}
